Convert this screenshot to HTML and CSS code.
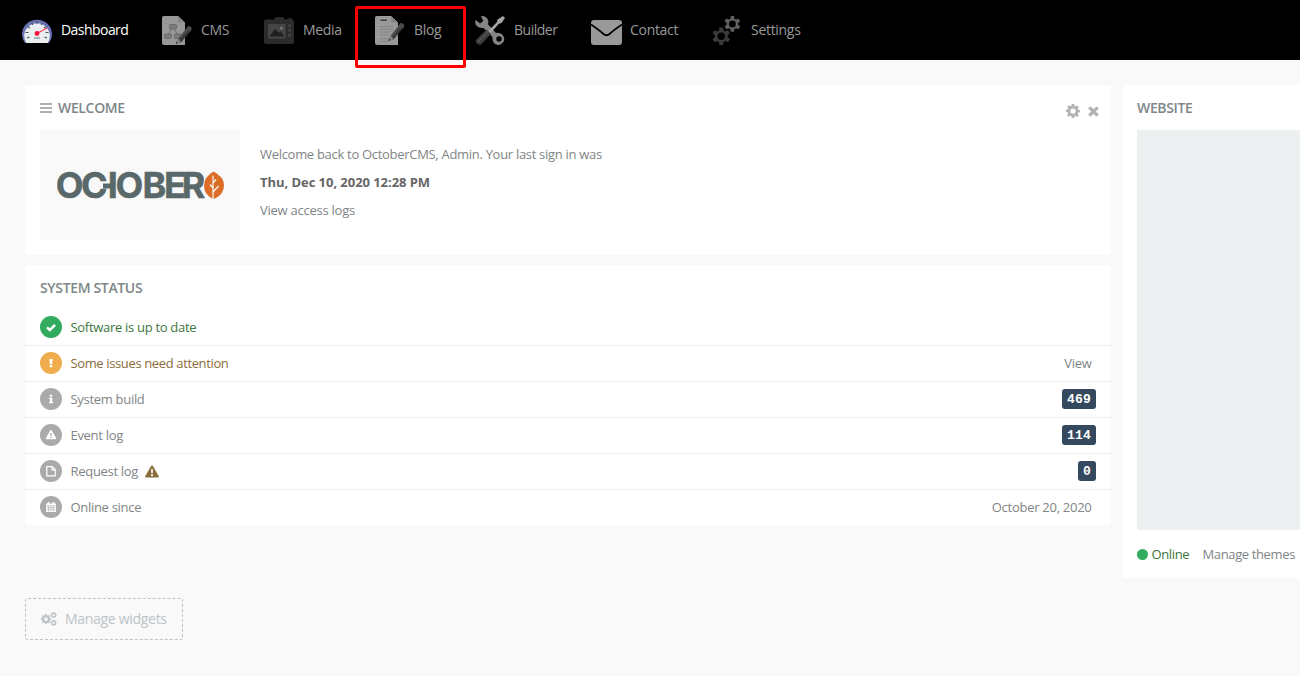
FILE: index.html
```html
<!DOCTYPE html>
<html lang="en">
<head>
<meta charset="utf-8">
<title>Dashboard</title>
<link rel="stylesheet" href="styles.css">
</head>
<body>
<svg class="defs" width="0" height="0" aria-hidden="true">
  <defs>
    <path id="cog" fill-rule="evenodd" d="M10 0h4l.7 3.200 2.200.9L19.700 2.400l2.300 2.600-1.900 2.800.9 2.200 3 .6v3.400l-3 .7-.9 2.200 1.800 2.700-2.500 2.500-2.700-1.700-2.200.9L14 24h-4l-.7-3.100-2.200-.9-2.700 1.700-2.500-2.500 1.800-2.700-.9-2.200L0 14v-4l3-.6.8-2.200L2.100 4.600l2.500-2.500 2.700 1.800 2.100-.8zM12 7.500a4.500 4.500 0 1 0 0 9 4.500 4.500 0 0 0 0-9z"/>
    <path id="gear6" fill-rule="evenodd" d="M9.500 0h5l.6 4 2.400 1.400 3.800-1.500 2.500 4.200-3.200 2.500v2.800l3.200 2.500-2.500 4.200-3.800-1.500-2.400 1.400-.6 4h-5l-.6-4-2.400-1.400-3.800 1.500-2.500-4.200 3.200-2.500v-2.800L.2 8.100l2.500-4.200 3.800 1.500L8.900 4zM12 6.800a5.200 5.200 0 1 0 0 10.400 5.200 5.200 0 0 0 0-10.400z"/>
    <path id="warn" fill-rule="evenodd" d="M7 0.500Q7.700.5 8.100 1.300L13.800 11.300Q14 12.500 13 12.500H1Q0 12.500.2 11.300L5.900 1.300Q6.300.5 7 .5zM6 4.300l.3 4h1.400l.3-4zM6.100 9.300v1.700h1.800V9.300z"/>
    <g id="pencil"><path d="M17 22.500L26.500 10.500 30 14 19.500 26.500 14.500 27.500z" fill="#393939"/><path d="M17 22.500L26.500 10.500l1.700 1.700L18 24z" fill="#505050"/><path d="M24.700 12.500l1.800-2.200q1.500-.8 3 .7 1.200 1.500.3 3l-1.700 2z" fill="#4b4b4b"/><path d="M14.300 27.700l2.700-5 2.500 3.500z" fill="#858585"/><path d="M14.200 27.800l1-2 1.300 1.400z" fill="#222"/></g>
  </defs>
</svg>

<nav class="mainnav">
  <a class="nav-item dashboard active">
    <svg class="nav-icon" viewBox="0 0 30 30"><path d="M3 28A15 14.500 0 1 1 27 28z" fill="#6972b4"/><path d="M4.500 28A12.800 12.500 0 1 1 25.500 28z" fill="#eceff1"/><path d="M15 6v3M9.500 7.500l1.300 2.500M20.500 7.500L19.200 10M5.500 11.500l2.500 1.500M24.500 11.500L22 13M3.500 17.500h3M26.500 17.500h-3M5 23l2.500-1M25 23l-2.500-1" stroke="#455a64" stroke-width="1.200"/><path d="M15 18.500L25 13" stroke="#ff3d57" stroke-width="1.200"/><circle cx="15" cy="18.500" r="2.400" fill="#f8143b"/><path d="M12 23h6" stroke="#8ba3af" stroke-width="1.500"/></svg>
    <span class="nav-label">Dashboard</span>
  </a>
  <a class="nav-item cms">
    <svg class="nav-icon" viewBox="0 0 30 30"><path d="M2 1h14l7 6.500V30H2Q0 30 0 28V3Q0 1 2 1z" fill="#989898"/><path d="M16 1v6.500h7z" fill="#858585"/><g fill="#7b7b7b" stroke="#666" stroke-width=".8"><rect x="7.500" y="9.500" width="7" height="4.500" rx="1"/><rect x="2.500" y="19" width="7" height="4.500" rx="1"/><rect x="12.500" y="19" width="7" height="4.500" rx="1"/><path d="M9.500 14L7 19M12.500 14l2.500 5" fill="none"/></g><use href="#pencil" x="-.5" y="1"/></svg>
    <span class="nav-label">CMS</span>
  </a>
  <a class="nav-item media">
    <svg class="nav-icon" viewBox="0 0 30 30"><path d="M2 4.500h8L12 2h7l2 2.500h2l1-1.300h4l.5 1.500Q30 5 30 7v20q0 2-2 2H2q-2 0-2-2V6.500q0-2 2-2z" fill="#2c2c2c"/><rect x="4" y="9" width="17.500" height="14.500" fill="#464646"/><path d="M5.500 21.500L11 14l4 4 1.500-2 4 5.500z" fill="#1f1f1f"/><circle cx="17.300" cy="13" r="1.500" fill="#777"/><g fill="#494949"><circle cx="25.500" cy="10.800" r="1.400"/><circle cx="25.500" cy="15.500" r="1.400"/><circle cx="25.500" cy="20.300" r="1.400"/></g></svg>
    <span class="nav-label">Media</span>
  </a>
  <a class="nav-item blog">
    <svg class="nav-icon" viewBox="0 0 30 30"><path d="M2 1h14l7 6.500V30H2Q0 30 0 28V3Q0 1 2 1z" fill="#999"/><path d="M16 1v6.500h7z" fill="#858585"/><path d="M5.500 5.200H12" stroke="#333" stroke-width="1.300"/><path d="M5 11.500h13M5 14.200h13M5 17h10M5 19.800h9M5 23.800h8M5 26.500h7" stroke="#858585" stroke-width="1"/><use href="#pencil" x="-1" y="-2"/></svg>
    <span class="nav-label">Blog</span>
  </a>
  <a class="nav-item builder">
    <svg class="nav-icon" viewBox="0 0 30 30"><path d="M6 1q5-.5 7 4 1 3-.3 4L21 18q3-1 6 1.300 3.500 4 1.500 7.500-3 4.500-7.500 2.700-4-2-3.500-7.500L8.500 13q-5 .5-7.500-3Q-.5 7 .7 5L5 8.500 8.300 6z" fill="#858585"/><circle cx="24" cy="24" r="2.700" fill="#000"/><path d="M12.500 17L22 7l.5-2.500L28 1l2 2-3.500 5-2.500.8L14.500 19z" fill="#a3a3a3"/><path d="M1 25l10.500-10.500 4.500 4.500L6 29.500q-2 1-4-1-2-2-1-3.500z" fill="#3c3c3c"/><path d="M3 27l10.500-10.500" stroke="#555" stroke-width="1.500"/></svg>
    <span class="nav-label">Builder</span>
  </a>
  <a class="nav-item contact">
    <svg class="nav-icon" viewBox="0 0 31 30"><rect y="5" width="31" height="25" rx="3" fill="#999"/><path d="M0 9.500Q8 15 12.500 19q3 2.500 6 0Q23 15 31 9.500" fill="none" stroke="#000" stroke-width="1.800"/></svg>
    <span class="nav-label">Contact</span>
  </a>
  <a class="nav-item settings">
    <svg class="nav-icon" viewBox="0 0 30 30"><use href="#gear6" fill="#606060" transform="translate(12.500 1) scale(.66)"/><use href="#gear6" fill="#3b3b3b" transform="translate(.5 12.500) scale(.73)"/></svg>
    <span class="nav-label">Settings</span>
  </a>
  <div class="highlight"></div>
</nav>

<main class="dashboard-body">
  <div class="columns">
    <div class="left">
      <section class="card welcome">
        <header class="card-head">
          <svg class="bars" viewBox="0 0 12 10"><path d="M0 1h12M0 5h12M0 9h12" stroke="#b0b0b0" stroke-width="1.900"/></svg>
          <h3>WELCOME</h3>
          <span class="tools">
            <svg width="14" height="14" viewBox="0 0 24 24" fill="#b3b3b3"><use href="#cog"/></svg>
            <svg width="11" height="11" viewBox="0 0 11 11"><path d="M1.300 1.300l8.400 8.400M9.700 1.300L1.300 9.700" stroke="#b3b3b3" stroke-width="3.300"/></svg>
          </span>
        </header>
        <div class="welcome-body">
          <div class="logo">
            <svg width="170" height="54" viewBox="0 -10 170 54">
              <g class="wordmark"><text y="28.300" x="-1.200 24 50.700 58.500 85.500 107 124.700">OCIOBER</text></g>
              <path d="M46 13.500h8v5h-8z" fill="#596868"/>
              <path d="M156.500 1.500Q167 7 167 15q0 9.500-9 13.500h-3Q147 24 147 15.500 147 7 156.500 1.500z" fill="#dc6d26" stroke="#f9f9f9" stroke-width="1.500" paint-order="stroke"/>
              <path d="M156 5.500v23M156 13l3-3.500M156 22l5.500-6M156 18l-3-3.500" fill="none" stroke="#f9f9f9" stroke-width="1.200"/>
            </svg>
          </div>
          <div class="welcome-text">
            <p>Welcome back to OctoberCMS, Admin. Your last sign in was</p>
            <p class="signin">Thu, Dec 10, 2020 12:28 PM</p>
            <p class="access">View access logs</p>
          </div>
        </div>
      </section>

      <section class="card status">
        <h3>SYSTEM STATUS</h3>
        <ul>
          <li><i class="dot green"><svg viewBox="0 0 22 22"><path d="M7 11.300l2.900 2.800 5.100-5.300" fill="none" stroke="#fff" stroke-width="2.500"/></svg></i><span class="name ok">Software is up to date</span></li>
          <li><i class="dot orange"><svg viewBox="0 0 22 22"><path d="M9.400 7h3.200l-.5 5.200H9.900zM9.700 13h2.600v2.300H9.700z" fill="#fff"/></svg></i><span class="name caution">Some issues need attention</span><span class="value">View</span></li>
          <li><i class="dot"><svg viewBox="0 0 22 22"><path d="M9.800 6.700h2.400v2H9.800zM9 9.700h3.300v4.200h.9v1.400H9v-1.400h.9V11H9z" fill="#fff"/></svg></i><span class="name">System build</span><b class="badge">469</b></li>
          <li><i class="dot"><svg viewBox="0 0 22 22"><use href="#warn" fill="#fff" transform="translate(5.600 5.600) scale(.77)"/></svg></i><span class="name">Event log</span><b class="badge">114</b></li>
          <li><i class="dot"><svg viewBox="0 0 22 22" fill="none" stroke="#fff" stroke-width="1.200"><path d="M6.800 6.600h5.600l2.800 2.800v6.400H6.800zM12 6.600v3.200h3.200"/></svg></i><span class="name">Request log</span><svg class="warning" viewBox="0 0 14 13" fill="#8a6d3b"><use href="#warn"/></svg><b class="badge">0</b></li>
          <li><i class="dot"><svg viewBox="0 0 22 22"><path d="M6 7.500h10v8.500H6z" fill="#fff"/><path d="M6 9.700h10M6.500 11.700h9M6.500 13.800h9M8.500 10v5.500M11 10v5.500M13.500 10v5.500" stroke="#aaa" stroke-width=".6"/><path d="M8.500 6v2M13.500 6v2" stroke="#fff" stroke-width="1.500"/></svg></i><span class="name">Online since</span><span class="value since">October 20, 2020</span></li>
        </ul>
      </section>
    </div>

    <section class="card website">
      <h3>WEBSITE</h3>
      <div class="preview"></div>
      <div class="site-links"><i class="online-dot"></i><span class="ok online">Online</span><span>Manage themes</span></div>
    </section>
  </div>

  <a class="manage">
    <svg width="16" height="14" viewBox="0 0 16 14" fill="#bdc3c7"><use href="#cog" transform="translate(0 2) scale(.42)"/><use href="#cog" transform="translate(9.500 0) scale(.26)"/><use href="#cog" transform="translate(9.500 7.700) scale(.26)"/></svg>
    <span>Manage widgets</span>
  </a>
</main>
</body>
</html>
```
FILE: styles.css
```css
* { box-sizing: border-box; }
body {
  margin: 0;
  height: 676px;
  overflow: hidden;
  background: #f9f9f9;
  color: #7f8586;
  font: 13px/20px "Open Sans", "Noto Sans", sans-serif;
  letter-spacing: -0.3px;
}
h3, p, ul { margin: 0; padding: 0; }
.defs { display: block; }

.mainnav {
  position: relative;
  display: flex;
  height: 60px;
  padding-left: 22px;
  background: #000;
}
.nav-item {
  display: flex;
  flex: none;
  gap: 9px;
  padding-top: 15px;
  color: #999;
  font-size: 14px;
  line-height: 30px;
  white-space: nowrap;
}
.nav-item.active { color: #fff; letter-spacing: -0.55px; }
.nav-icon { flex: none; width: 30px; height: 30px; }
.dashboard { width: 140px; }
.cms { width: 102px; }
.media { width: 111px; }
.blog { width: 100px; }
.builder { width: 116px; letter-spacing: -0.5px; }
.contact { width: 121px; gap: 8px; }
.contact .nav-icon { width: 31px; }
.highlight {
  position: absolute;
  left: 355px;
  top: 6px;
  width: 111px;
  height: 62px;
  border: 3px solid #fe0000;
  border-radius: 2px;
}

.dashboard-body { padding: 25px 0 0 25px; }
.columns { display: flex; align-items: flex-start; gap: 11px; }
.left { display: flex; flex: none; flex-direction: column; gap: 10px; width: 1086px; }
.card { border-radius: 3px; background: #fff; white-space: nowrap; }
.card h3 { color: #7e8789; font-size: 14px; font-weight: 600; line-height: 20px; letter-spacing: -0.35px; }

.welcome { height: 170px; padding: 13px 12px 0 15px; }
.card-head { display: flex; align-items: center; height: 20px; }
.bars { width: 12px; height: 10px; margin-right: 6px; }
.tools { display: flex; align-items: center; gap: 8px; margin: 6px 0 0 auto; }
.welcome-body { display: flex; gap: 20px; margin-top: 12px; }
.logo { width: 200px; height: 110px; padding: 30px 0 0 17px; background: #f9f9f9; }
.wordmark {
  fill: #596868;
  stroke: #596868;
  stroke-width: 0.5px;
  font: 700 36px Inter, sans-serif;
  letter-spacing: 0;
}
.welcome-text { padding-top: 14px; }
.welcome-text p { height: 28px; }
.welcome-text .signin { color: #666; font-weight: 700; letter-spacing: -0.05px; }
.welcome-text .access { letter-spacing: -0.25px; }

.status { height: 260px; padding-top: 13px; }
.status h3 { padding-left: 15px; }
.status ul { margin-top: 11px; list-style: none; }
.status li {
  display: flex;
  align-items: center;
  height: 36px;
  padding: 0 15px;
  border-top: 1px solid #eceeef;
}
.status li:not(:first-child) { padding-bottom: 1px; }
.status li:first-child { border-top: 0; }
.dot { width: 22px; height: 22px; margin-right: 8.5px; border-radius: 50%; background: #aaa; }
.dot svg { display: block; }
.green { background: #31ac5f; }
.orange { background: #f0ad4e; }
.ok { color: #3c763d; }
.caution { color: #8a6d3b; letter-spacing: -0.37px; }
.value { margin: 0 4.500px 0 auto; }
.since { letter-spacing: -0.27px; }
.badge {
  height: 20px;
  margin-left: auto;
  padding: 0 5px;
  border-radius: 3px;
  background: #34495e;
  color: #fff;
  font: 700 13px/21px "Liberation Mono", monospace;
  letter-spacing: 0.2px;
}
.warning { width: 14px; height: 13px; margin-left: 7px; }

.website { flex: 1; min-width: 0; height: 493px; padding: 13px 0 0 15px; border-radius: 3px 0 0 3px; }
.preview { height: 400px; margin-top: 12px; background: #ecf0f1; }
.site-links { display: flex; align-items: center; height: 20px; margin-top: 14px; letter-spacing: -0.37px; }
.online-dot { width: 11px; height: 11px; margin-right: 3.500px; border-radius: 50%; background: #31ac5f; }
.online { width: 51px; }

.manage {
  display: flex;
  align-items: center;
  gap: 8px;
  width: 158px;
  height: 42px;
  margin-top: 20px;
  padding-left: 15px;
  border: 1px dashed #bdc3c7;
  border-radius: 3px;
  color: #bdc3c7;
  font-size: 14px;
  white-space: nowrap;
}
```
